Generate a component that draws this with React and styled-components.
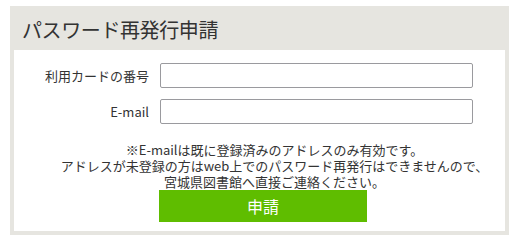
import React from "react";
import styled, { createGlobalStyle } from "styled-components";

const Global = createGlobalStyle`
  html, body { margin: 0; padding: 0; background: #ffffff; }
  body { font-family: "Noto Sans CJK JP", "Noto Sans", sans-serif; color: #333333; }
  * { box-sizing: border-box; }
`;

const Panel = styled.section`
  margin: 6px 0 0 10px;
  width: 499px;
  background: #e6e5e0;
  padding: 0 4px 4px 4px;
`;

const Header = styled.h2`
  margin: 0;
  height: 44px;
  display: flex;
  align-items: center;
  padding: 2px 0 0 8px;
  font-size: 20px;
  font-weight: 400;
  color: #333333;
  letter-spacing: -0.4px;
`;

const Body = styled.div`
  background: #ffffff;
  padding: 13px 0 9px 0;
  display: flex;
  flex-direction: column;
`;

const Row = styled.div`
  display: grid;
  grid-template-columns: 135px 313px;
  column-gap: 11px;
  align-items: center;
  margin-bottom: ${(p) => p.$gap}px;
`;

const Label = styled.label`
  text-align: right;
  font-size: 13px;
  color: #333333;
  white-space: nowrap;
`;

const Input = styled.input`
  height: 25px;
  width: 313px;
  border: 1px solid #9a9a9e;
  border-radius: 2px;
  background: #ffffff;
  font-size: 13px;
  padding: 0 4px;
`;

const Note = styled.p`
  margin: 18px 0 0 0;
  padding-left: 30px;
  text-align: center;
  font-size: 13px;
  line-height: 16px;
  color: #333333;
`;

const Submit = styled.button`
  margin-left: 145px;
  width: 208px;
  height: 32px;
  border: none;
  background: #5fbd00;
  color: #ffffff;
  font-family: inherit;
  font-size: 16px;
  font-weight: 400;
  cursor: pointer;
`;

export default function App() {
  return (
    <>
      <Global />
      <Panel>
        <Header>パスワード再発行申請</Header>
        <Body>
          <Row $gap={11}>
            <Label htmlFor="card">利用カードの番号</Label>
            <Input id="card" type="text" />
          </Row>
          <Row $gap={0}>
            <Label htmlFor="mail">E-mail</Label>
            <Input id="mail" type="text" />
          </Row>
          <Note>
            ※E-mailは既に登録済みのアドレスのみ有効です。
            <br />
            アドレスが未登録の方はweb上でのパスワード再発行はできませんので、
            <br />
            宮城県図書館へ直接ご連絡ください。
          </Note>
          <Submit type="button">申請</Submit>
        </Body>
      </Panel>
    </>
  );
}
